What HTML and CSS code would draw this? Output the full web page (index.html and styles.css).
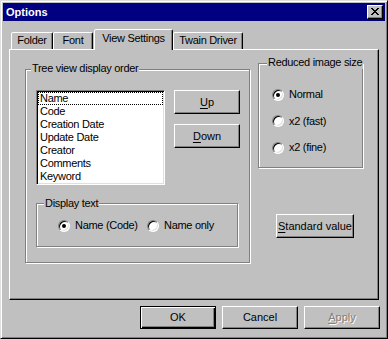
FILE: index.html
```html
<!DOCTYPE html>
<html lang="en">

<head>
    <meta charset="UTF-8">
    <title>Options</title>
    <link rel="stylesheet" href="styles.css">
</head>

<body>
    <div class="window">
        <!-- Title bar -->
        <div class="titlebar">
            <span class="title">Options</span>
            <button class="close-btn">
                <svg width="8" height="7" viewBox="0 0 8 7" shape-rendering="crispEdges">
                    <path d="M0 0h2v1H0zM6 0h2v1H6zM1 1h2v1H1zM5 1h2v1H5zM2 2h4v1H2zM3 3h2v1H3zM2 4h4v1H2zM1 5h2v1H1zM5 5h2v1H5zM0 6h2v1H0zM6 6h2v1H6z" fill="#000"/>
                </svg>
            </button>
        </div>

        <!-- Tabs -->
        <div class="tabs">
            <div class="tab tab-folder">Folder</div>
            <div class="tab tab-font">Font</div>
            <div class="tab tab-active">View Settings</div>
            <div class="tab tab-twain">Twain Driver</div>
        </div>

        <div class="panel">
            <!-- Tree view display order -->
            <div class="group group-order">
                <span class="group-label">Tree view display order</span>
                <div class="order-row">
                    <ul class="listbox">
                        <li class="focused">Name</li>
                        <li>Code</li>
                        <li>Creation Date</li>
                        <li>Update Date</li>
                        <li>Creator</li>
                        <li>Comments</li>
                        <li>Keyword</li>
                    </ul>
                    <div class="order-buttons">
                        <button class="btn btn-move"><u>U</u>p</button>
                        <button class="btn btn-move"><u>D</u>own</button>
                    </div>
                </div>

                <div class="group group-display">
                    <span class="group-label">Display text</span>
                    <div class="radio-row">
                        <label class="radio radio-first"><span class="radio-dot checked"></span>Name (Code)</label>
                        <label class="radio"><span class="radio-dot"></span>Name only</label>
                    </div>
                </div>
            </div>

            <!-- Reduced image size -->
            <div class="side">
                <div class="group group-size">
                    <span class="group-label">Reduced image size</span>
                    <div class="radio-col">
                        <label class="radio"><span class="radio-dot checked"></span>Normal</label>
                        <label class="radio"><span class="radio-dot"></span>x2 (fast)</label>
                        <label class="radio"><span class="radio-dot"></span>x2 (fine)</label>
                    </div>
                </div>
                <button class="btn btn-standard"><u>S</u>tandard value</button>
            </div>
        </div>

        <!-- Dialog buttons -->
        <div class="footer">
            <button class="btn btn-footer btn-default">OK</button>
            <button class="btn btn-footer">Cancel</button>
            <button class="btn btn-footer btn-disabled"><u>A</u>pply</button>
        </div>
    </div>
</body>

</html>
```

FILE: styles.css
```css
* {
    box-sizing: border-box;
}

body {
    margin: 0;
    font-family: "Liberation Sans", Arial, sans-serif;
    font-size: 11px;
    line-height: 13px;
    letter-spacing: -0.3px;
    color: #000;
    background: #c0c0c0;
}

.window {
    width: 388px;
    height: 339px;
    padding: 2px;
    background: #c0c0c0;
    border: 1px solid;
    border-color: #dfdfdf #000 #000 #dfdfdf;
    box-shadow: inset 1px 1px #fff, inset -1px -1px #808080;
}

.titlebar {
    height: 18px;
    display: flex;
    align-items: center;
    justify-content: space-between;
    background: #000080;
    padding-left: 3px;
}

.title {
    color: #fff;
    font-weight: bold;
    letter-spacing: 0;
    line-height: 18px;
}

.close-btn {
    width: 16px;
    height: 14px;
    margin-right: 2px;
    padding: 0;
    display: flex;
    align-items: center;
    justify-content: center;
    background: #c0c0c0;
    border: 1px solid;
    border-color: #fff #000 #000 #fff;
    box-shadow: inset -1px -1px #808080;
}

.close-btn svg {
    display: block;
    margin: 0 1px 1px 0;
}

.tabs {
    display: flex;
    align-items: flex-end;
    height: 20px;
    margin: 8px 6px 0;
    padding-left: 2px;
}

.tab {
    height: 17px;
    padding-top: 1px;
    text-align: center;
    background: #c0c0c0;
    border: 1px solid;
    border-bottom: none;
    border-color: #fff #000 transparent #fff;
    border-radius: 2px 2px 0 0;
    box-shadow: inset -1px 0 #808080;
}

.tab-folder {
    width: 42px;
}

.tab-font {
    width: 40px;
}

.tab-active {
    position: relative;
    z-index: 1;
    width: 79px;
    height: 21px;
    margin-left: 1px;
    margin-bottom: -1px;
    padding-top: 2px;
}

.tab-twain {
    width: 70px;
}

.panel {
    display: flex;
    align-items: flex-start;
    gap: 8px;
    height: 251px;
    margin: 0 6px;
    padding-left: 15px;
    border: 1px solid;
    border-color: #fff #000 #000 #fff;
    box-shadow: inset -1px -1px #808080;
}

.group {
    position: relative;
    border: 1px solid #808080;
    box-shadow: inset 1px 1px #fff, 1px 1px #fff;
}

.group-label {
    position: absolute;
    top: -8px;
    left: 5px;
    padding: 0 1px;
    background: #c0c0c0;
    white-space: nowrap;
}

.group-order {
    width: 225px;
    height: 194px;
    margin-top: 19px;
    padding: 20px 0 0 10px;
}

.order-row {
    display: flex;
    gap: 9px;
}

.listbox {
    width: 129px;
    height: 95px;
    margin: 0;
    padding: 1px;
    list-style: none;
    background: #fff;
    border: 1px solid;
    border-color: #808080 #fff #fff #808080;
    box-shadow: inset 1px 1px #000, inset -1px -1px #dfdfdf;
}

.listbox li {
    height: 13px;
    padding-left: 2px;
}

.listbox .focused {
    outline: 1px dotted #000;
    outline-offset: -1px;
}

.order-buttons {
    display: flex;
    flex-direction: column;
    gap: 10px;
}

.btn {
    padding: 0;
    font: inherit;
    color: #000;
    background: #c0c0c0;
    border: 1px solid;
    border-color: #fff #000 #000 #fff;
    box-shadow: inset -1px -1px #808080;
}

.btn u {
    text-decoration-thickness: 1px;
    text-underline-offset: 2px;
}

.btn-move {
    width: 66px;
    height: 24px;
}

.group-display {
    width: 202px;
    height: 44px;
    margin-top: 18px;
    padding: 15px 0 0 21px;
}

.group-display .group-label {
    top: -7px;
    left: 7px;
}

.radio-row {
    display: flex;
}

.radio {
    display: flex;
    align-items: center;
    gap: 5px;
    height: 13px;
    white-space: nowrap;
}

.radio-first {
    width: 89px;
}

.radio-dot {
    position: relative;
    width: 12px;
    height: 12px;
    flex: none;
    border-radius: 50%;
    background: #fff;
    border: 1px solid;
    border-color: #808080 #fff #fff #808080;
    box-shadow: inset 1px 1px #000, inset -1px -1px #dfdfdf;
}

.radio-dot.checked::after {
    content: "";
    position: absolute;
    left: 3px;
    top: 3px;
    width: 4px;
    height: 4px;
    border-radius: 50%;
    background: #000;
}

.side {
    display: flex;
    flex-direction: column;
    margin-top: 13px;
}

.group-size {
    width: 105px;
    height: 105px;
    padding: 24px 0 0 13px;
}

.group-size .group-label {
    left: 8px;
}

.radio-col {
    display: flex;
    flex-direction: column;
    gap: 13.5px;
}

.btn-standard {
    width: 78px;
    height: 24px;
    margin: 46px 0 0 18px;
}

.footer {
    display: flex;
    justify-content: flex-end;
    gap: 6px;
    margin-top: 6px;
    padding-right: 5px;
}

.btn-footer {
    width: 76px;
    height: 23px;
}

.btn-default {
    border-color: #000;
    box-shadow: inset 1px 1px #fff, inset -1px -1px #000, inset -2px -2px #808080;
}

.btn-disabled {
    color: #808080;
    text-shadow: 1px 1px #fff;
}
```
